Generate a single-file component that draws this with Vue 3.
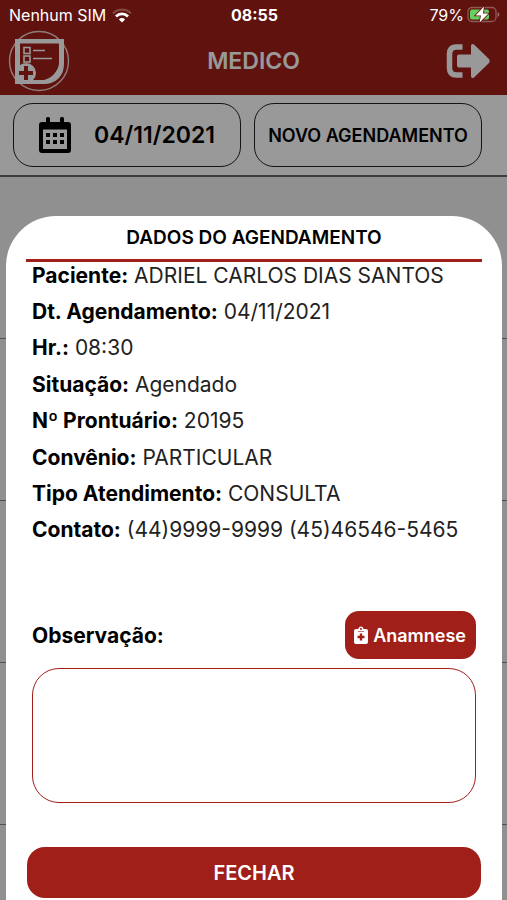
<template>
  <div class="app">
    <header class="header">
      <div class="status">
        <span class="status-left">
          Nenhum SIM
          <svg class="wifi" viewBox="0 0 20 15" width="20" height="15">
            <path d="M1 5.500a12.600 12.600 0 0 1 18 0" fill="none" stroke="#fff" stroke-opacity=".22" stroke-width="2.200" />
            <path d="M4 8.400a8.400 8.400 0 0 1 12 0" fill="none" stroke="#fff" stroke-width="2.800" />
            <path d="M10 14.600l-3.100-3.200a4.400 4.400 0 0 1 6.200 0z" fill="#fff" />
          </svg>
        </span>
        <span class="status-time">08:55</span>
        <span class="status-right">
          79%
          <svg viewBox="0 0 33 18" width="33" height="18">
            <rect x="1" y="1.500" width="28" height="14" rx="4" fill="none" stroke="#fff" stroke-opacity=".3" stroke-width="1.300" />
            <path d="M30.500 6v5q2-.8 2-2.500t-2-2.500z" fill="#fff" fill-opacity=".35" />
            <rect x="3" y="3.500" width="19" height="10" rx="2" fill="#65cf5f" />
            <path d="M17 .5L8.500 9.500h5.500L12.500 16.500l9-9h-5.500z" fill="#fff" stroke="#60130e" stroke-width="1.600" paint-order="stroke" />
          </svg>
        </span>
      </div>
      <div class="title-bar">
        <svg class="logo" viewBox="0 0 62 62" width="62" height="62">
          <circle cx="31" cy="31" r="29.500" fill="none" stroke="#fff" stroke-opacity=".8" stroke-width="1.400" />
          <path d="M7 9h49v25c0 12-8 20-20 20H7z" fill="#fff" />
          <path d="M12 13.500h39V34c-1 7-7 14-15 16H12z" fill="#a01f18" />
          <g fill="none" stroke="#fff" stroke-width="1.600">
            <rect x="16" y="17.500" width="6" height="6" />
            <rect x="16" y="26" width="6" height="6" />
            <path d="M25 20.500h12M25 28.500h19" />
          </g>
          <circle cx="18" cy="43" r="10" fill="#fff" />
          <path d="M18 36v14M11 43h14" stroke="#a01f18" stroke-width="4" />
        </svg>
        <h1>MEDICO</h1>
        <button class="logout" type="button" aria-label="Sair">
          <svg viewBox="0 0 46 36" width="46" height="36">
            <path d="M17.500 4H11.500q-7 0-7 7v14q0 7 7 7h6" fill="none" stroke="#fff" stroke-width="5.500" />
            <path d="M14 11.500h12V3q0-3 3-1.500l15 14.500q1.500 2 0 4L29 34.500q-3 1.500-3-1.500v-8.500H14q-2 0-2-2v-9q0-2 2-2z" fill="#fff" />
          </svg>
        </button>
      </div>
    </header>

    <div class="toolbar">
      <button class="tool date" type="button">
        <svg viewBox="0 0 32 36" width="32" height="36">
          <path d="M3 5h4V1.500Q7 0 8.500 0h1Q11 0 11 1.500V5h10V1.500Q21 0 22.500 0h1Q25 0 25 1.500V5h4q3 0 3 3v25q0 3-3 3H3q-3 0-3-3V8q0-3 3-3z" />
          <path d="M4 12.500h24V32H4z" fill="#fff" />
          <path d="M7 16h4v4H7zM14 16h4v4h-4zM21 16h4v4h-4zM7 23h4v4H7zM14 23h4v4h-4zM21 23h4v4h-4z" />
        </svg>
        04/11/2021
      </button>
      <button class="tool" type="button">NOVO AGENDAMENTO</button>
    </div>

    <ul class="agenda">
      <li v-for="n in 5" :key="n"></li>
    </ul>

    <div class="overlay">
      <section class="modal" role="dialog" aria-labelledby="modal-title">
        <h2 id="modal-title">DADOS DO AGENDAMENTO</h2>
        <div class="dados">
          <p v-for="item in dados" :key="item.label">
            <strong>{{ item.label }}:</strong> {{ item.valor }}
          </p>
        </div>
        <div class="obs-header">
          <label for="obs">Observação:</label>
          <button class="anamnese" type="button">
            <svg viewBox="0 0 14 18" width="14" height="18">
              <path d="M2 3h2.500a2.500 2.500 0 0 1 5 0H12q2 0 2 2v11q0 2-2 2H2q-2 0-2-2V5q0-2 2-2z" fill="#fff" />
              <circle cx="7" cy="3" r="1" fill="#a01f18" />
              <path d="M4 5.500h6" stroke="#a01f18" stroke-opacity=".6" />
              <path d="M7 7.500v7M3.500 11h7" stroke="#a01f18" stroke-width="2.400" />
            </svg>
            Anamnese
          </button>
        </div>
        <textarea id="obs" v-model="observacao"></textarea>
        <button class="fechar" type="button">FECHAR</button>
      </section>
    </div>
  </div>
</template>

<script setup>
import { ref } from 'vue';

const observacao = ref('');

const dados = ref([
  { label: 'Paciente', valor: 'ADRIEL CARLOS DIAS SANTOS' },
  { label: 'Dt. Agendamento', valor: '04/11/2021' },
  { label: 'Hr.', valor: '08:30' },
  { label: 'Situação', valor: 'Agendado' },
  { label: 'Nº Prontuário', valor: '20195' },
  { label: 'Convênio', valor: 'PARTICULAR' },
  { label: 'Tipo Atendimento', valor: 'CONSULTA' },
  { label: 'Contato', valor: '(44)9999-9999 (45)46546-5465' },
]);
</script>

<style>
body {
  margin: 0;
}
</style>

<style scoped>
.app {
  position: relative;
  height: 100vh;
  overflow: hidden;
  background-color: #fff;
  font-family: Inter, 'Liberation Sans', sans-serif;
  color: #000;
}

button {
  font-family: inherit;
  cursor: pointer;
}

.header {
  background-color: #a01f18;
  color: #fff;
}

/* stays bright above the overlay */
.status {
  position: relative;
  z-index: 2;
  display: grid;
  grid-template-columns: 1fr auto 1fr;
  align-items: center;
  height: 30px;
  padding: 0 7px 0 9px;
  font-size: 16px;
}

.status-left,
.status-right {
  display: flex;
  align-items: center;
  gap: 6px;
}

.status-right {
  justify-content: flex-end;
  gap: 3px;
}

.status-time {
  font-weight: 700;
}

.title-bar {
  display: grid;
  grid-template-columns: 1fr auto 1fr;
  align-items: center;
  height: 65px;
  padding: 0 8px 3px;
  box-sizing: border-box;
}

.title-bar h1 {
  margin: 0;
  font-size: 23px;
  font-weight: 600;
}

.logout {
  justify-self: end;
  display: flex;
  padding: 0 8px;
  border: none;
  background: none;
}

.toolbar {
  display: flex;
  gap: 13px;
  padding: 8px 25px 8px 13px;
  border-bottom: 2px solid #666;
}

.tool {
  flex: 1;
  display: flex;
  align-items: center;
  justify-content: center;
  height: 64px;
  padding: 0;
  border: 1px solid #222;
  border-radius: 20px;
  background-color: transparent;
  color: #000;
  font-size: 18px;
  font-weight: 600;
  white-space: nowrap;
}

.date {
  gap: 23px;
  font-size: 23px;
}

.agenda {
  margin: 0;
  padding: 0;
  list-style: none;
}

.agenda li {
  height: 161px;
  border-bottom: 1px solid #888;
  background-color: #f0f0f0;
}

.overlay {
  position: absolute;
  inset: 0;
  background-color: rgba(0, 0, 0, 0.4);
}

.modal {
  display: flex;
  flex-direction: column;
  box-sizing: border-box;
  min-height: 684px;
  margin: 216px 5px 0 6px;
  padding: 0 20px;
  border-radius: 50px 50px 0 0;
  background-color: #fff;
}

.modal h2 {
  margin: 0;
  border-bottom: 3px solid #a01f18;
  font-size: 19px;
  font-weight: 600;
  line-height: 43px;
  text-align: center;
}

.dados {
  display: grid;
  grid-auto-rows: 1fr;
  align-items: center;
  height: 291px;
  margin: -5px 6px 0;
  color: #222;
  font-size: 21px;
}

.dados p {
  margin: 0;
}

.dados strong,
.obs-header label {
  color: #000;
  font-weight: 700;
}

.obs-header {
  display: flex;
  align-items: center;
  justify-content: space-between;
  margin: 63px 6px 9px;
  font-size: 21px;
}

.anamnese {
  display: flex;
  align-items: center;
  gap: 5px;
  height: 48px;
  padding: 0 10px 0 9px;
  border: none;
  border-radius: 14px;
  background-color: #a01f18;
  color: #fff;
  font-size: 18px;
  font-weight: 600;
}

textarea {
  height: 135px;
  margin: 0 6px;
  padding: 16px;
  box-sizing: border-box;
  border: 1px solid #a01f18;
  border-radius: 27px;
  background-color: #fff;
  font-family: inherit;
  font-size: 18px;
  resize: none;
}

.fechar {
  height: 51px;
  margin: 44px 1px 0;
  border: none;
  border-radius: 18px;
  background-color: #a01f18;
  color: #fff;
  font-size: 20px;
  font-weight: 600;
}
</style>
